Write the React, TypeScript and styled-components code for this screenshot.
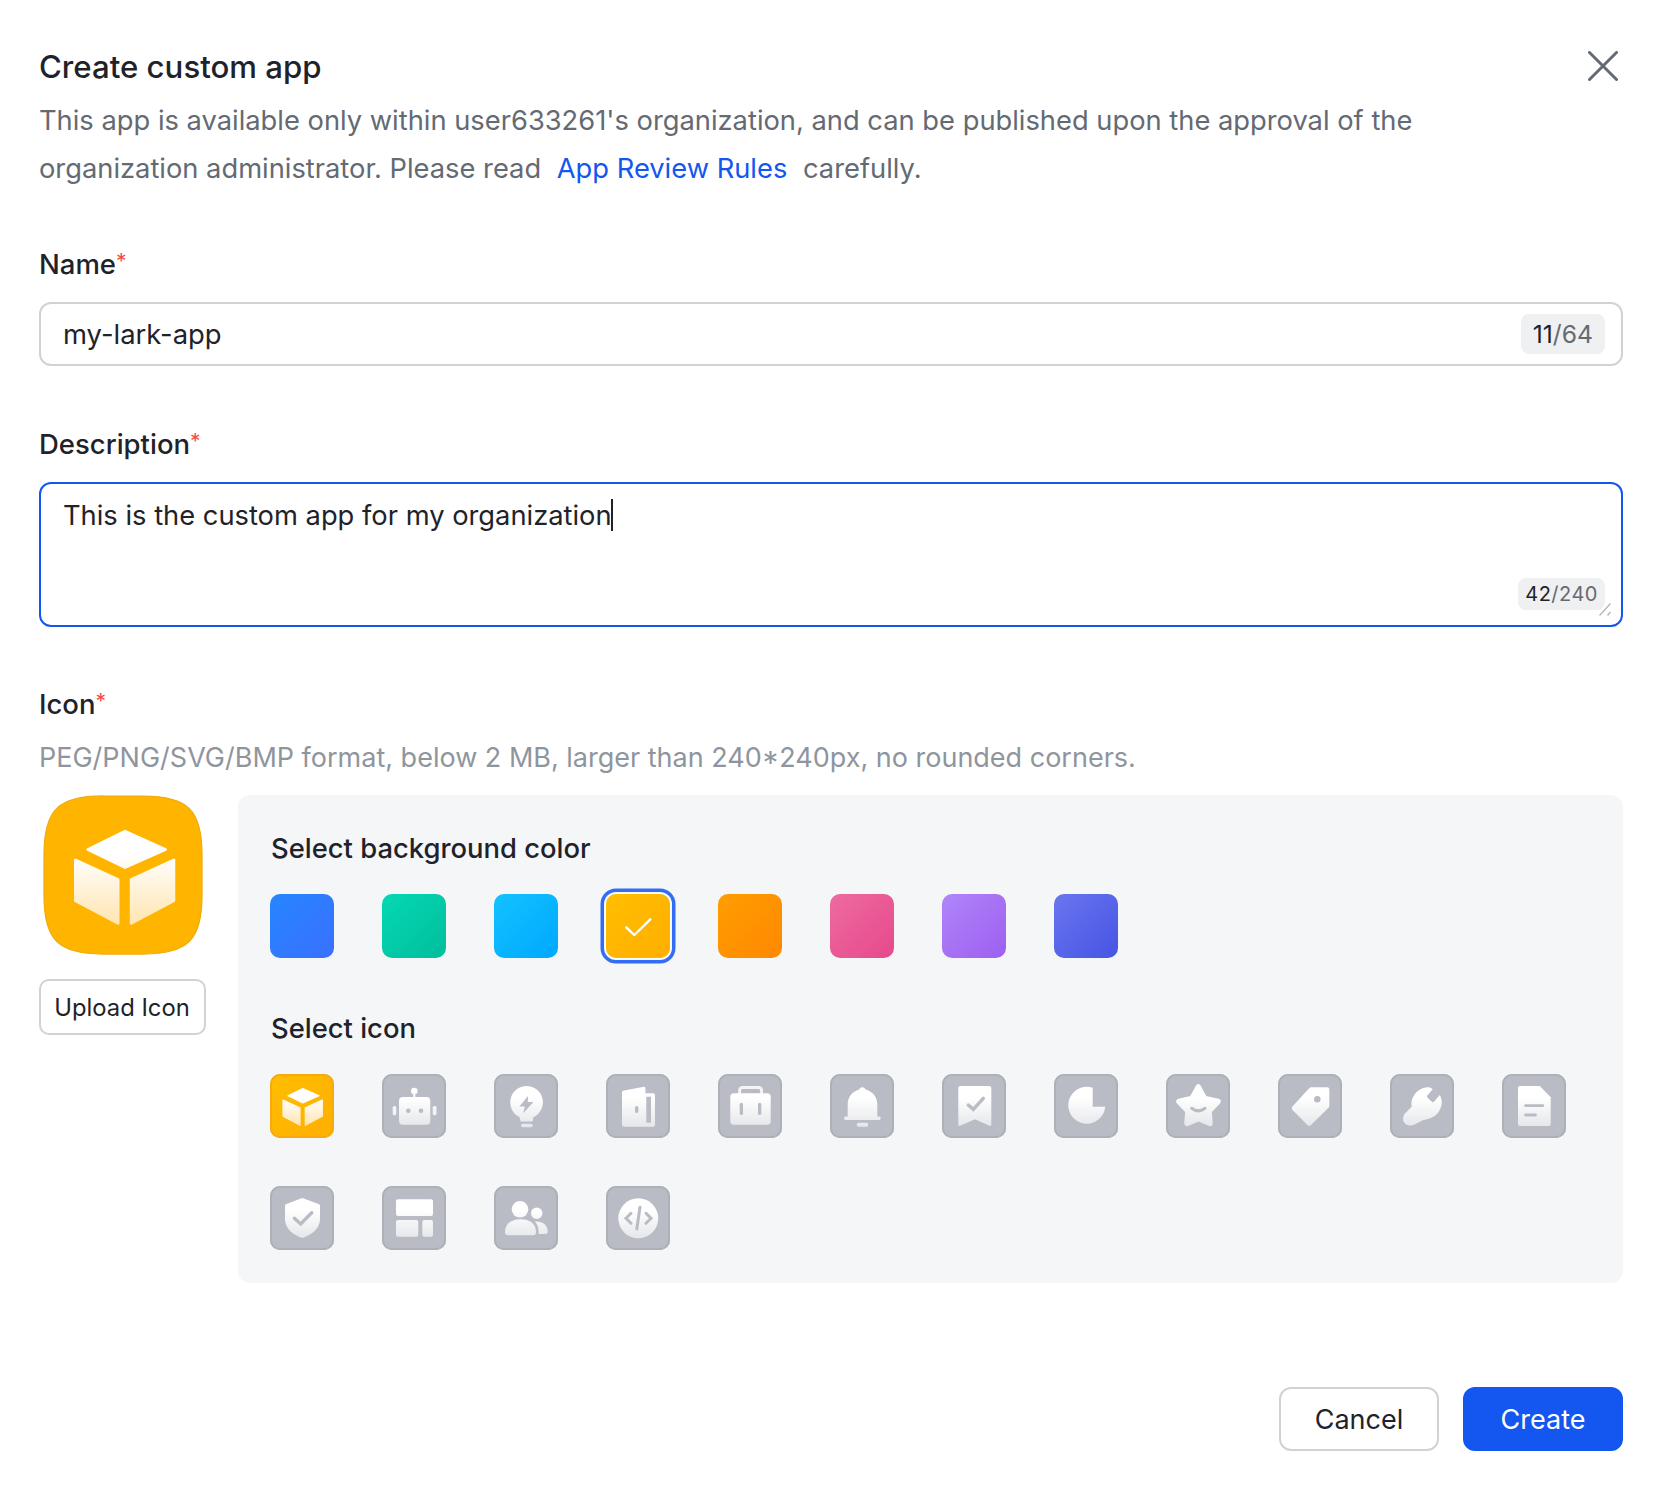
import React, { ReactNode, useId } from "react";
import styled, { createGlobalStyle } from "styled-components";

const GlobalStyle = createGlobalStyle`
    html, body {
        margin: 0;
        padding: 0;
        background: #fff;
    }

    body {
        font-family: Inter, "Liberation Sans", sans-serif;
        color: #1f2329;
    }
`

const swatches = [
    ["#2685ff", "#3a70ff"],
    ["#04d8b4", "#02bd9b"],
    ["#13c2ff", "#00a8ff"],
    ["#ffbe00", "#ffae00"],
    ["#ff9d00", "#ff8800"],
    ["#ee6b9f", "#e6498b"],
    ["#b085fa", "#9d5ff0"],
    ["#6a75ef", "#4754e4"],
]

const GRAY = "#b9bcc5"
const AMBER = "#ffb400"

type Glyph = (cut: string) => ReactNode

const cube: Glyph = () => (
    <g strokeWidth="1.2" strokeLinejoin="round">
        <path d="M32.8 14.5 49 21.8 32.8 29 18 21.8Z"/>
        <path d="M13 26 30 33.8V51.3L13 42.3Z"/>
        <path d="M35.3 33.8 52.3 26V42.3L35.3 51.3Z"/>
    </g>
)

const glyphs: Glyph[] = [
    cube,
    (cut) => (
        <>
            <circle cx="32.3" cy="17" r="3.3"/>
            <rect x="31.3" y="18" width="2" height="6"/>
            <rect x="17" y="23" width="31.3" height="27.7" rx="4"/>
            <rect x="10.7" y="32" width="3.6" height="9.3" rx="1.6"/>
            <rect x="50.7" y="32" width="3.8" height="9.3" rx="1.6"/>
            <circle cx="26.3" cy="36.7" r="2.3" fill={cut}/>
            <circle cx="39" cy="36.7" r="2.3" fill={cut}/>
        </>
    ),
    (cut) => (
        <>
            <path d="M32.6 12a16.3 16.3 0 0 1 7 31L38.5 47.5H26.5L25.5 43a16.3 16.3 0 0 1 7.1-31Z"/>
            <rect x="27" y="49.7" width="11.7" height="3.5" rx="1.7"/>
            <path d="M34 22 25.5 32.5H31L29 39.5 39.5 28H33.8Z" fill={cut}/>
        </>
    ),
    (cut) => (
        <>
            <path d="M18 16.4 38 12.8a1.3 1.3 0 0 1 1.4 1.3V19.3H47a2 2 0 0 1 2 2V50.7a2 2 0 0 1-2 2H18a2 2 0 0 1-2-2V18.5a2 2 0 0 1 2-2.1Z"/>
            <rect x="40.3" y="22.7" width="4.7" height="26" fill={cut}/>
            <rect x="29" y="32" width="3.3" height="7" rx="1.6" fill={cut}/>
        </>
    ),
    (cut) => (
        <>
            <rect x="21.6" y="13.5" width="22" height="10" rx="3" fill="none" strokeWidth="3" stroke="#f4f4f5"/>
            <rect x="12.3" y="19.3" width="40.4" height="31.4" rx="3.5"/>
            <rect x="21.7" y="28.7" width="3.3" height="12.3" rx="1.6" fill={cut}/>
            <rect x="40" y="28.7" width="3.3" height="12.3" rx="1.6" fill={cut}/>
        </>
    ),
    () => (
        <>
            <path d="M32.3 13.3c1.6 0 2.6.7 3.2 2.1 6.6 1.6 11.6 7 11.8 14.6V42.6h1.7a1.7 1.7 0 0 1 0 3.4H15.7a1.7 1.7 0 0 1 0-3.4h2V30c.2-7.6 5.3-13 11.6-14.6.6-1.4 1.5-2.1 3-2.1Z"/>
            <rect x="26.7" y="48.7" width="11.6" height="4" rx="2"/>
        </>
    ),
    (cut) => (
        <>
            <path d="M18.3 12H47.3a2 2 0 0 1 2 2V50.5a1.3 1.3 0 0 1-1.9 1.2L33 45.3 18.2 51.7a1.3 1.3 0 0 1-1.9-1.2V14a2 2 0 0 1 2-2Z"/>
            <path d="M26.3 31 31.3 35.3 41.3 24.3" fill="none" stroke={cut} strokeWidth="3.4"/>
        </>
    ),
    () => <path d="M38.7 13.7V32.7H51.2A18.5 18.5 0 1 1 38.7 13.7Z"/>,
    (cut) => (
        <>
            <path d="M32.3 13 38.5 24.5 52 27.5 43 37 44 49.5 32.5 44.5 21 49.5 22 37 13 27.5 26 24.5Z" strokeWidth="5.5" strokeLinejoin="round"/>
            <path d="M25.7 34.3Q32.3 39.5 39 34.3" fill="none" stroke={cut} strokeWidth="3"/>
        </>
    ),
    (cut) => (
        <>
            <path d="M33.2 13.3H49.3a2 2 0 0 1 2 2V32a2.5 2.5 0 0 1-.8 1.8L33 51a2.5 2.5 0 0 1-3.5 0L14.5 36a2.5 2.5 0 0 1 0-3.5L31.4 14a2.5 2.5 0 0 1 1.8-.7Z"/>
            <circle cx="39.3" cy="25.3" r="3.3" fill={cut}/>
        </>
    ),
    () => <path d="M36.7 13.3C39 13 41 13.6 42.7 15.3L37.3 21.5C36.8 22.2 37 23 37.4 23.5L41.7 27.7C42.5 28.4 43.3 28.3 44 27.7L49.7 21C51.5 24 52.3 27 51.5 31 50.5 37 46 42.5 39.5 44.5 37 45.3 35 45.6 33.3 46L24.5 50.6C21.5 52 17.5 52 15 49.5 12.5 47 12.5 43 14.5 40L21.7 32.7C21 29 21.5 25.5 23.3 22.7 26 17.5 31 14 36.7 13.3Z"/>,
    (cut) => (
        <>
            <path d="M18 12H37.7L48.7 23.3V50a2 2 0 0 1-2 2H18a2 2 0 0 1-2-2V14a2 2 0 0 1 2-2Z"/>
            <path d="M23.5 31.7H40.8M23.5 41H33.5" fill="none" stroke={cut} strokeWidth="2.8"/>
        </>
    ),
    (cut) => (
        <>
            <path d="M32.3 12 48.6 18a2 2 0 0 1 1.4 2V33C50 42.5 41.5 49 32.3 52 23 49 15 42.5 15 33V20a2 2 0 0 1 1.4-2Z"/>
            <path d="M24.3 32.3 30.7 38 41.7 26.7" fill="none" stroke={cut} strokeWidth="3.4"/>
        </>
    ),
    () => (
        <>
            <rect x="14" y="13.3" width="37" height="16.7" rx="2"/>
            <rect x="14" y="34" width="22.3" height="16.7" rx="2"/>
            <rect x="40.3" y="34" width="10.7" height="16.7" rx="2"/>
        </>
    ),
    () => (
        <>
            <circle cx="26" cy="23.3" r="8.3"/>
            <path d="M11 46C11 38 17 33.3 26.5 33.3S42 38 42 46C42 48.3 41 49.3 39 49.3H14C12 49.3 11 48.3 11 46Z"/>
            <circle cx="42.7" cy="27.3" r="5.7"/>
            <path d="M41 35.7C48 35 53.7 38.5 53.7 45.5 53.7 47 53 48 51.5 48H44.5C45 42.5 44 38.7 41 35.7Z"/>
        </>
    ),
    (cut) => (
        <>
            <circle cx="32.3" cy="32.3" r="20"/>
            <path d="M25 27.3 20 32.3 25 37.3M40 27.3 45 32.3 40 37.3M34 21.2 30.8 43" fill="none" stroke={cut} strokeWidth="3"/>
        </>
    ),
]

const TileArt = (props: { glyph: Glyph, cut: string, bottom: string }) => {
    const id = useId()
    return (
        <svg viewBox="0 0 64 64" width="100%" height="100%">
            <defs>
                <linearGradient id={id} gradientUnits="userSpaceOnUse" x1="0" y1="12" x2="0" y2="52">
                    <stop offset="0.3" stopColor="#fff"/>
                    <stop offset="1" stopColor={props.bottom}/>
                </linearGradient>
            </defs>
            <g fill={`url(#${id})`} stroke={`url(#${id})`} strokeWidth="0" strokeLinecap="round">
                {props.glyph(props.cut)}
            </g>
        </svg>
    )
}

export default function App() {
    return (
        <>
            <GlobalStyle/>
            <Dialog>
                <Header>
                    <Title>Create custom app</Title>
                    <Close viewBox="0 0 30 30">
                        <path d="M1.5 1.5 28.5 28.5M28.5 1.5 1.5 28.5"/>
                    </Close>
                </Header>
                <Lead>
                    <div>This app is available only within user633261's organization, and can be published upon the approval of the</div>
                    <div>organization administrator. Please read <Link>App Review Rules</Link> carefully.</div>
                </Lead>

                <NameLabel>Name<Star>*</Star></NameLabel>
                <InputBox>
                    <span>my-lark-app</span>
                    <Counter><b>11</b>/64</Counter>
                </InputBox>

                <FieldLabel>Description<Star>*</Star></FieldLabel>
                <TextBox>
                    <span>This is the custom app for my organization<Caret/></span>
                    <SmallCounter><b>42</b>/240</SmallCounter>
                    <Grip viewBox="0 0 12 13">
                        <path d="M.5 12.5 11.5.5M8.5 12.5 11.5 9"/>
                    </Grip>
                </TextBox>

                <IconLabel>Icon<Star>*</Star></IconLabel>
                <Hint>PEG/PNG/SVG/BMP format, below 2 MB, larger than 240*240px, no rounded corners.</Hint>
                <IconRow>
                    <PreviewColumn>
                        <Preview>
                            <svg viewBox="0 0 64 64" width="160" height="160">
                                <path d="M24 .4H40C58 .4 63.6 6 63.6 24V40C63.6 58 58 63.6 40 63.6H24C6 63.6 .4 58 .4 40V24C.4 6 6 .4 24 .4Z" fill={AMBER} stroke="#f0ac0e" strokeWidth=".5"/>
                            </svg>
                            <PreviewArt>
                                <TileArt glyph={cube} cut={AMBER} bottom="#ffe5b0"/>
                            </PreviewArt>
                        </Preview>
                        <UploadButton>Upload Icon</UploadButton>
                    </PreviewColumn>
                    <Panel>
                        <PanelTitle>Select background color</PanelTitle>
                        <SwatchRow>
                            {swatches.map((colors, index) => (
                                <Swatch key={index} $from={colors[0]} $to={colors[1]} $selected={index === 3}>
                                    {index === 3 &&
                                        <svg viewBox="0 0 64 64" width="64" height="64">
                                            <path d="M20.3 33.3 28.3 41 44.3 25.3" fill="none" stroke="#fff" strokeWidth="2.4" strokeLinecap="round" strokeLinejoin="round"/>
                                        </svg>}
                                </Swatch>
                            ))}
                        </SwatchRow>
                        <PanelTitle>Select icon</PanelTitle>
                        <TileGrid>
                            {glyphs.map((glyph, index) => (
                                <Tile key={index} $active={index === 0}>
                                    <TileArt glyph={glyph} cut={index === 0 ? AMBER : GRAY} bottom={index === 0 ? "#ffe5b0" : "#e6e7ea"}/>
                                </Tile>
                            ))}
                        </TileGrid>
                    </Panel>
                </IconRow>

                <Footer>
                    <CancelButton>Cancel</CancelButton>
                    <CreateButton>Create</CreateButton>
                </Footer>
            </Dialog>
        </>
    )
}

const Dialog = styled.div`
    box-sizing: border-box;
    width: 1662px;
    height: 1494px;
    padding: 45px 39px 44px 39px;
    background: #fff;
    overflow: hidden;
`

const Header = styled.div`
    display: flex;
    justify-content: space-between;
    align-items: center;
    padding-right: 5px;
    height: 44px;
`

const Title = styled.h1`
    margin: 0;
    font-size: 31.2px;
    line-height: 44px;
    font-weight: 500;
    color: #1f2329;
`

const Close = styled.svg`
    width: 30px;
    height: 30px;
    margin-top: -2px;

    path {
        fill: none;
        stroke: #646a73;
        stroke-width: 3;
        stroke-linecap: round;
    }
`

const Lead = styled.div`
    margin: 8px 0 0;
    font-size: 27.3px;
    line-height: 48px;
    color: #646a73;
`

const Link = styled.a`
    color: #1456f0;
    margin: 0 8px;
`

const FieldLabel = styled.div`
    margin: 58px 0 18px;
    font-size: 27.5px;
    line-height: 40px;
    font-weight: 500;
    color: #1f2329;
`

const NameLabel = styled(FieldLabel)`
    margin-top: 51px;
`

const IconLabel = styled(FieldLabel)`
    margin: 57px 0 10px;
`

const Star = styled.span`
    color: #f54a45;
    font-weight: 400;
    font-size: 21px;
    line-height: 0;
    vertical-align: 5px;
`

const InputBox = styled.div`
    box-sizing: border-box;
    display: flex;
    justify-content: space-between;
    align-items: center;
    height: 64px;
    padding: 0 16px 0 22px;
    border: 2px solid #d0d3d6;
    border-radius: 12px;
    font-size: 27.4px;
    color: #1f2329;
`

const Counter = styled.span`
    padding: 0 12px;
    height: 40px;
    line-height: 40px;
    border-radius: 8px;
    background: #eff0f1;
    font-size: 24.7px;
    color: #646a73;

    b {
        font-weight: 400;
        color: #1f2329;
    }
`

const TextBox = styled.div`
    box-sizing: border-box;
    position: relative;
    height: 145px;
    padding: 12px 22px;
    border: 2px solid #1456f0;
    border-radius: 12px;
    font-size: 27.3px;
    line-height: 40px;
    color: #1f2329;
`

const Caret = styled.span`
    display: inline-block;
    width: 2px;
    height: 32px;
    margin-left: -1px;
    vertical-align: -6px;
    background: #1f2329;
`

const SmallCounter = styled(Counter)`
    position: absolute;
    right: 16px;
    bottom: 15px;
    height: 32px;
    line-height: 32px;
    padding: 0 7px;
    font-size: 20px;
    letter-spacing: 0.5px;
`

const Grip = styled.svg`
    position: absolute;
    right: 10px;
    bottom: 9px;
    width: 12px;
    height: 13px;

    path {
        fill: none;
        stroke: #b6b8bc;
        stroke-width: 1.5;
    }
`

const Hint = styled.div`
    font-size: 27px;
    line-height: 48px;
    color: #8f959e;
`

const IconRow = styled.div`
    display: flex;
    gap: 33px;
    margin-top: 13px;
`

const PreviewColumn = styled.div`
    display: flex;
    flex-direction: column;
    align-items: center;
    gap: 24px;
    width: 166px;
    flex: none;
`

const Preview = styled.div`
    position: relative;
    width: 160px;
    height: 160px;
    margin-left: 2px;

    > svg {
        display: block;
    }
`

const PreviewArt = styled.div`
    position: absolute;
    inset: 0;
`

const UploadButton = styled.button`
    box-sizing: border-box;
    width: 167px;
    height: 56px;
    padding: 0;
    border: 2px solid #d0d3d6;
    border-radius: 10px;
    background: #fff;
    font-family: inherit;
    font-size: 23.8px;
    color: #1f2329;
`

const Panel = styled.div`
    flex: 1;
    box-sizing: border-box;
    height: 488px;
    padding: 33px 32px 32px;
    border-radius: 12px;
    background: #f5f6f8;
`

const PanelTitle = styled.div`
    margin-left: 1px;
    font-size: 27.4px;
    line-height: 40px;
    font-weight: 500;
    color: #1f2329;
`

const SwatchRow = styled.div`
    display: flex;
    gap: 48px;
    margin: 26px 0 50px;
`

const Swatch = styled.div<{ $from: string, $to: string, $selected?: boolean }>`
    box-sizing: border-box;
    width: 64px;
    height: 64px;
    border-radius: 10px;
    background: linear-gradient(135deg, ${props => props.$from}, ${props => props.$to});
    box-shadow: ${props => props.$selected ? "0 0 0 1px #fff, 0 0 0 2px #f5f6f8, 0 0 0 5.5px #336df4" : "none"};

    svg {
        display: block;
    }
`

const TileGrid = styled.div`
    display: flex;
    flex-wrap: wrap;
    gap: 48px;
    margin-top: 26px;
`

const Tile = styled.div<{ $active?: boolean }>`
    box-sizing: border-box;
    position: relative;
    width: 64px;
    height: 64px;
    border-radius: 10px;
    background: ${props => props.$active ? "linear-gradient(135deg, #ffbe00, #ffae00)" : "#b9bcc5"};
    box-shadow: inset 0 0 0 2px ${props => props.$active ? "#f5aa10" : "#adb0b8"};

    svg {
        display: block;
    }
`

const Footer = styled.div`
    display: flex;
    justify-content: flex-end;
    gap: 24px;
    margin-top: 104px;
`

const CancelButton = styled.button`
    box-sizing: border-box;
    width: 160px;
    height: 64px;
    padding: 0;
    border: 2px solid #d0d3d6;
    border-radius: 12px;
    background: #fff;
    font-family: inherit;
    font-size: 27px;
    color: #1f2329;
`

const CreateButton = styled(CancelButton)`
    border-color: #1456f0;
    background: #1456f0;
    color: #fff;
`
